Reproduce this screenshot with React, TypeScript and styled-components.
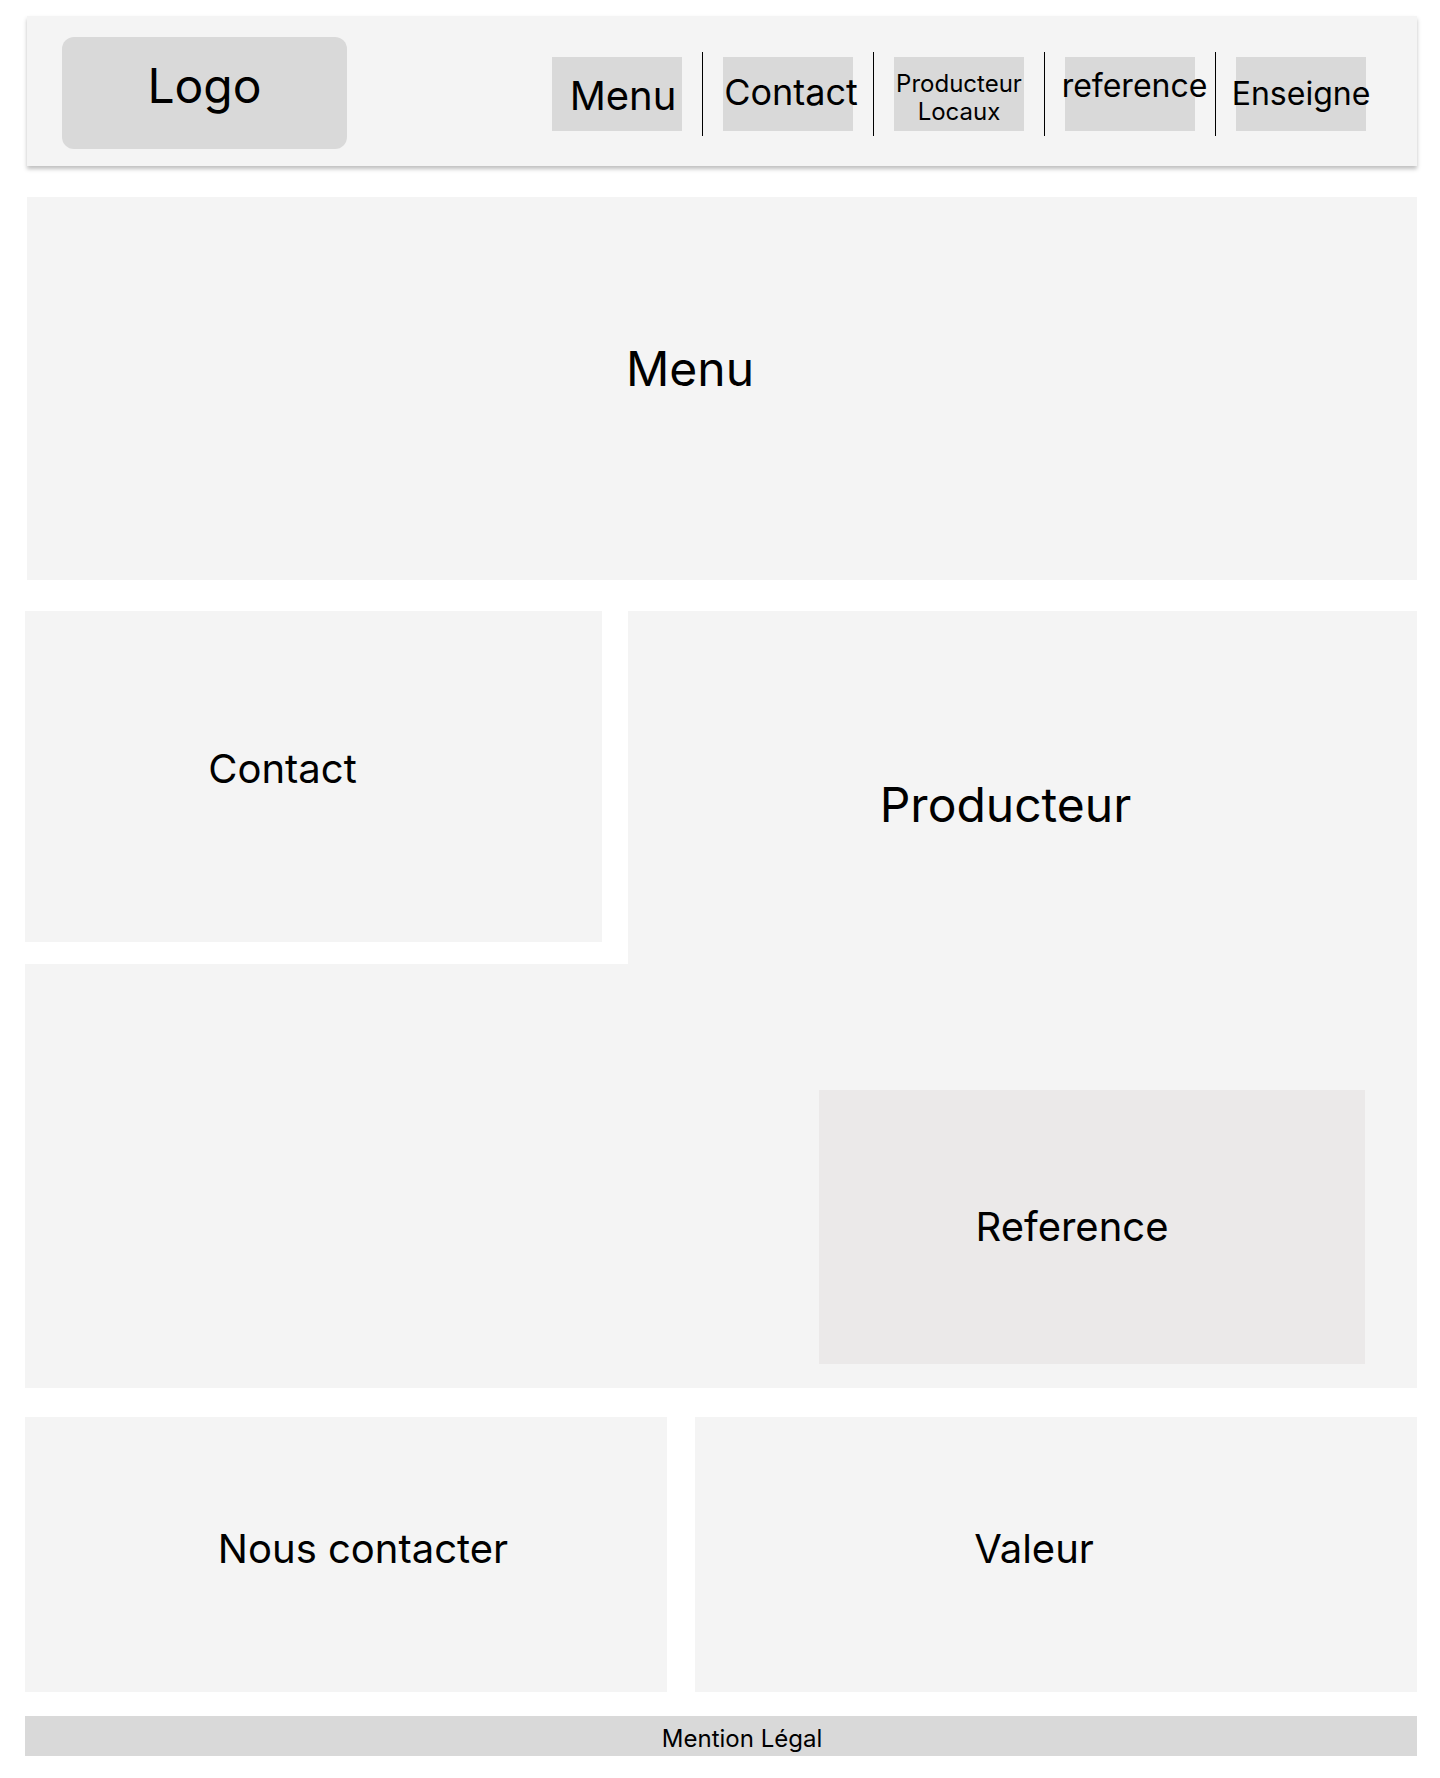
import React from "react";
import styled, { createGlobalStyle } from "styled-components";

const GlobalStyle = createGlobalStyle`
  html, body {
    margin: 0;
    padding: 0;
    background: #ffffff;
  }
  body {
    font-family: Inter, "Noto Sans", "Liberation Sans", sans-serif;
    color: #000000;
  }
  * {
    box-sizing: border-box;
  }
`;

const Page = styled.div`
  width: 1440px;
  min-height: 1778px;
  padding: 16px 23px 0 25px;
  display: flex;
  flex-direction: column;
`;

const Header = styled.header`
  margin-left: 2px;
  height: 150px;
  background: #f4f4f4;
  box-shadow: 0 3px 4px rgba(0, 0, 0, 0.25);
  display: flex;
  align-items: center;
  justify-content: space-between;
  padding: 4px 51px 0 35px;
`;

const Logo = styled.div`
  width: 285px;
  height: 112px;
  background: #d9d9d9;
  border-radius: 12px;
  display: flex;
  align-items: center;
  justify-content: center;
  padding-bottom: 15px;
  font-size: 48px;
`;

const Nav = styled.nav`
  display: flex;
  align-items: center;
  gap: 20px;
  margin-top: 2px;
`;

const Separator = styled.span`
  width: 1px;
  height: 84px;
  background: #000000;
`;

const NavItem = styled.a<{ $size: number; $pad?: string }>`
  width: 130px;
  height: 74px;
  background: #d9d9d9;
  display: flex;
  align-items: center;
  justify-content: center;
  padding: ${(p) => p.$pad || "0"};
  font-size: ${(p) => p.$size}px;
  line-height: 1.21;
  white-space: nowrap;
  text-align: center;
  color: #000000;
  text-decoration: none;
`;

const StackedLabel = styled.span`
  line-height: 28px;
`;

const Panel = styled.section<{ $size: number; $pad?: string }>`
  background: #f4f4f4;
  display: flex;
  align-items: center;
  justify-content: center;
  padding: ${(p) => p.$pad || "0"};
  font-size: ${(p) => p.$size}px;
  line-height: 1.21;
`;

const HeroPanel = styled(Panel)`
  margin: 31px 0 0 2px;
  height: 383px;
`;

const MiddleGrid = styled.div`
  margin-top: 31px;
  display: grid;
  grid-template-columns: 577px 26px 789px;
  grid-template-rows: 331px 22px 424px;
`;

const ContactPanel = styled(Panel)`
  grid-area: 1 / 1 / 2 / 2;
`;

const ProducerPanel = styled(Panel)`
  grid-area: 1 / 3 / 3 / 4;
`;

const LowerPanel = styled.div`
  grid-area: 3 / 1 / 4 / 4;
  background: #f4f4f4;
  display: flex;
  justify-content: flex-end;
  align-items: flex-start;
  padding: 126px 52px 0 0;
`;

const ReferenceCard = styled(Panel)`
  width: 546px;
  height: 274px;
  background: #ebe9e9;
`;

const BottomRow = styled.div`
  margin-top: 29px;
  display: grid;
  grid-template-columns: 642px 722px;
  column-gap: 28px;
  height: 275px;
`;

const Footer = styled.footer`
  margin-top: 24px;
  height: 40px;
  background: #d9d9d9;
  display: flex;
  align-items: center;
  justify-content: center;
  padding: 5px 0 0 42px;
  font-size: 24px;
  line-height: 1.21;
`;

const navLinks = [
  { label: "Menu", size: 40, pad: "4px 0 0 12px" },
  { label: "Contact", size: 36, pad: "0 0 2px 6px" },
  { label: "Producteur\nLocaux", size: 24, pad: "7px 0 0 0" },
  { label: "reference", size: 32, pad: "0 0 15px 9px" },
  { label: "Enseigne", size: 32 }
];

export default function App(): JSX.Element {
  return (
    <>
      <GlobalStyle />
      <Page>
        <Header>
          <Logo>Logo</Logo>
          <Nav>
            {navLinks.map((link, i) => (
              <React.Fragment key={link.label}>
                {i > 0 && <Separator />}
                <NavItem $size={link.size} $pad={link.pad}>
                  {link.label.includes("\n") ? (
                    <StackedLabel>
                      {link.label.split("\n").map((line, j) => (
                        <div key={j}>{line}</div>
                      ))}
                    </StackedLabel>
                  ) : (
                    link.label
                  )}
                </NavItem>
              </React.Fragment>
            ))}
          </Nav>
        </Header>

        <HeroPanel $size={48} $pad="0 64px 38px 0">
          Menu
        </HeroPanel>

        <MiddleGrid>
          <ContactPanel $size={40} $pad="0 62px 14px 0">
            Contact
          </ContactPanel>
          <ProducerPanel $size={48} $pad="36px 34px 0 0">
            Producteur
          </ProducerPanel>
          <LowerPanel>
            <ReferenceCard $size={40} $pad="0 40px 0 0">
              Reference
            </ReferenceCard>
          </LowerPanel>
        </MiddleGrid>

        <BottomRow>
          <Panel $size={40} $pad="0 0 10px 34px">
            Nous contacter
          </Panel>
          <Panel $size={40} $pad="0 44px 10px 0">
            Valeur
          </Panel>
        </BottomRow>

        <Footer>Mention Légal</Footer>
      </Page>
    </>
  );
}
